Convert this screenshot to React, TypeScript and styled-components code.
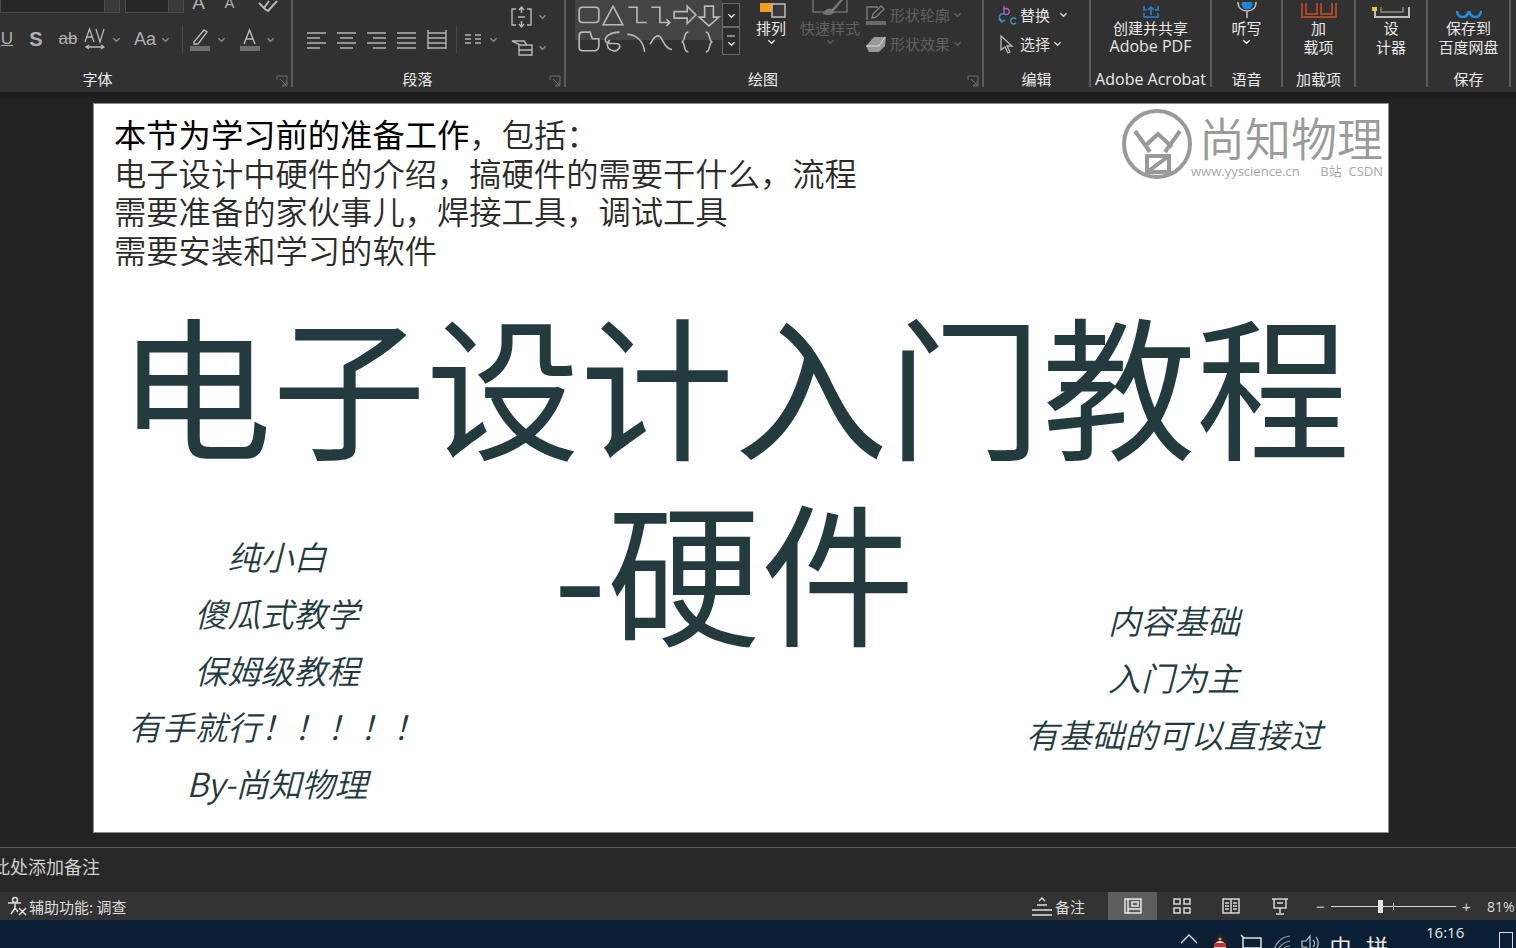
import React from "react";
import styled, { createGlobalStyle } from "styled-components";

const Global = createGlobalStyle`
  html, body { margin: 0; padding: 0; background: #222222; }
  body { font-family: "Noto Sans CJK SC", "Liberation Sans", sans-serif; }
`;

const Page = styled.div`
  width: 1516px;
  height: 948px;
  overflow: hidden;
  display: flex;
  flex-direction: column;
  background: #222222;
`;

/* ---------- ribbon ---------- */
const Ribbon = styled.div`
  height: 92px;
  flex: none;
  display: flex;
  background: #313131;
  overflow: hidden;
`;
const Group = styled.div<{ $w: number; $last?: boolean }>`
  position: relative;
  width: ${(p) => p.$w}px;
  flex: none;
  box-sizing: border-box;
  height: 87px;
  display: flex;
  flex-direction: column;
  border-right: ${(p) => (p.$last ? "0" : "2px solid #5c5c5c")};
`;
const Body = styled.div<{ $pl?: number }>`
  height: 70px;
  flex: none;
  display: flex;
  flex-direction: column;
  padding-left: ${(p) => p.$pl ?? 0}px;
`;
const GroupLabel = styled.div<{ $pr?: number }>`
  height: 17px;
  line-height: 17px;
  font-size: 15px;
  color: #ececec;
  text-align: center;
  padding-right: ${(p) => p.$pr ?? 0}px;
  font-family: "Noto Sans CJK SC", sans-serif;
  white-space: nowrap;
`;
const Launcher = styled.svg`
  position: absolute;
  right: 3px;
  bottom: 0;
  width: 12px;
  height: 12px;
`;
const Row = styled.div<{ $h: number; $mt?: number; $end?: boolean }>`
  height: ${(p) => p.$h}px;
  margin-top: ${(p) => p.$mt ?? 0}px;
  display: flex;
  align-items: ${(p) => (p.$end ? "flex-end" : "center")};
  flex: none;
`;
const Slot = styled.div<{ $w: number }>`
  width: ${(p) => p.$w}px;
  flex: none;
  display: flex;
  align-items: center;
  justify-content: center;
  color: #b8b8b8;
`;
const FontBox = styled.div<{ $w: number }>`
  width: ${(p) => p.$w}px;
  height: 13px;
  flex: none;
  background: #262626;
  border: 1px solid #4c4c4c;
  border-top: 0;
  box-sizing: border-box;
  display: flex;
  justify-content: flex-end;
`;
const FontBoxBtn = styled.div`
  width: 14px;
  background: #3a3a3a;
  border-left: 1px solid #4c4c4c;
`;
const Glyph = styled.span<{ $size?: number; $weight?: number; $strike?: boolean; $under?: boolean }>`
  font-family: "Liberation Sans", sans-serif;
  font-size: ${(p) => p.$size ?? 17}px;
  font-weight: ${(p) => p.$weight ?? 400};
  line-height: 20px;
  color: #b0b0b0;
  text-decoration: ${(p) => (p.$strike ? "line-through" : p.$under ? "underline" : "none")};
`;
const Divider = styled.div`
  width: 1px;
  height: 28px;
  background: #484848;
  flex: none;
`;
const Chev = ({ c = "#8a8a8a", s = 9 }: { c?: string; s?: number }) => (
  <svg width={s} height={s} viewBox="0 0 10 10" fill="none" stroke={c} strokeWidth="1.5">
    <path d="M1.5 3.5 5 7l3.5-3.5" />
  </svg>
);
const Ic = styled.svg`
  flex: none;
  display: block;
`;
const LauncherIcon = () => (
  <Launcher viewBox="0 0 12 12" fill="none" stroke="#6d6d6d">
    <path d="M1 5V1h10v10H6M4 4l6 6M10 6v4H6" />
  </Launcher>
);
const Lines = ({ d }: { d: string }) => (
  <Ic width="20" height="20" viewBox="0 0 20 20" fill="none" stroke="#b4b4b4" strokeWidth="1.4">
    <path d={d} />
  </Ic>
);

const Gallery = styled.div`
  width: 147px;
  height: 55px;
  flex: none;
  background: #444444;
  display: grid;
  grid-template-columns: repeat(6, 24px);
  grid-template-rows: 17px 27px 26px;
  align-items: center;
  justify-items: center;
  margin-top: -15px;
  padding-left: 2px;
  box-sizing: border-box;
`;
const GalleryShape = styled.svg`
  width: 24px;
  height: 24px;
`;
const ScrollCol = styled.div`
  display: flex;
  flex-direction: column;
  margin-top: 3px;
  flex: none;
`;
const ScrollBtn = styled.div<{ $h: number }>`
  width: 18px;
  height: ${(p) => p.$h}px;
  box-sizing: border-box;
  border: 1px solid #6a6a6a;
  background: #2c2c2c;
  display: flex;
  align-items: center;
  justify-content: center;
  flex-direction: column;
  gap: 1px;
`;
const BigCol = styled.div<{ $w: number; $dim?: boolean }>`
  width: ${(p) => p.$w}px;
  flex: none;
  display: flex;
  flex-direction: column;
  align-items: center;
  color: ${(p) => (p.$dim ? "#616161" : "#e8e8e8")};
  font-size: 15px;
  line-height: 19px;
  white-space: nowrap;
`;
const IconTop = styled.div`
  height: 18px;
  flex: none;
  display: flex;
  align-items: flex-end;
  justify-content: center;
`;
const SideRow = styled.div<{ $dim?: boolean }>`
  display: flex;
  align-items: center;
  gap: 3px;
  height: 29px;
  font-size: 15px;
  color: ${(p) => (p.$dim ? "#616161" : "#e4e4e4")};
  white-space: nowrap;
`;
const SideCol = styled.div<{ $w: number; $pl?: number }>`
  width: ${(p) => p.$w}px;
  padding-left: ${(p) => p.$pl ?? 0}px;
  box-sizing: border-box;
  flex: none;
  display: flex;
  flex-direction: column;
`;
const Columns = styled.div<{ $pl?: number }>`
  display: flex;
  padding-left: ${(p) => p.$pl ?? 0}px;
`;
const AcrobatText = styled.span`
  font-family: "Open Sans", "Noto Sans CJK SC", sans-serif;
  font-size: 16px;
  line-height: 19px;
`;

/* ---------- workspace ---------- */
const Workspace = styled.div`
  height: 755px;
  flex: none;
  padding: 12px 0 0 94px;
  box-sizing: border-box;
  background: linear-gradient(#191919, #232323 9px);
`;
const Slide = styled.div`
  position: relative;
  width: 1294px;
  height: 728px;
  background: #ffffff;
  overflow: hidden;
  box-shadow: 0 0 0 1px #8c8c8c;
`;
const Intro = styled.div`
  position: absolute;
  left: 20px;
  top: 10px;
  font-size: 32.3px;
  line-height: 38.7px;
  font-weight: 350;
  color: #2b2b2b;
  white-space: nowrap;
`;
const Strong = styled.span`
  color: #000;
  font-weight: 400;
`;
const Title = styled.div`
  position: absolute;
  left: 0;
  width: 1280px;
  top: 185px;
  text-align: center;
  font-size: 154px;
  line-height: 186px;
  font-weight: 400;
  color: #233b3f;
`;
const Slogan = styled.div<{ $left: number; $top: number; $w: number }>`
  position: absolute;
  left: ${(p) => p.$left}px;
  top: ${(p) => p.$top}px;
  width: ${(p) => p.$w}px;
  text-align: center;
  font-size: 33px;
  line-height: 56.8px;
  font-style: italic;
  font-weight: 350;
  color: #233b3f;
  white-space: nowrap;
`;
const Logo = styled.div`
  position: absolute;
  right: 5px;
  top: 4px;
  display: flex;
  gap: 8px;
  color: #9a9a9a;
`;
const LogoText = styled.div`
  display: flex;
  flex-direction: column;
`;
const LogoName = styled.div`
  font-size: 46px;
  line-height: 56px;
  font-weight: 350;
  white-space: nowrap;
  margin-left: -2px;
`;
const LogoSub = styled.div`
  display: flex;
  justify-content: space-between;
  font-size: 13px;
  line-height: 15px;
  margin-left: -10px;
  color: #a8a8a8;
  font-family: "Open Sans", "Noto Sans CJK SC", sans-serif;
  white-space: nowrap;
`;

/* ---------- notes + status ---------- */
const Notes = styled.div`
  height: 45px;
  flex: none;
  box-sizing: border-box;
  border-top: 1px solid #5a5a5a;
  background: #272727;
  color: #cfcfcf;
  font-size: 18px;
  line-height: 37px;
  overflow: hidden;
  white-space: nowrap;
`;
const NotesText = styled.span`
  display: inline-block;
  margin-left: -8px;
`;
const Status = styled.div`
  height: 28px;
  flex: none;
  background: #333333;
  color: #dcdcdc;
  display: flex;
  align-items: center;
  font-size: 15px;
  white-space: nowrap;
  overflow: hidden;
`;
const StatusLeft = styled.div`
  display: flex;
  align-items: center;
  gap: 2px;
  padding-left: 7px;
  flex: 1;
`;
const StatusNote = styled.div`
  display: flex;
  align-items: center;
  gap: 2px;
  width: 77px;
  flex: none;
`;
const ViewBtn = styled.div<{ $on?: boolean }>`
  width: 49px;
  height: 28px;
  flex: none;
  display: flex;
  align-items: center;
  justify-content: center;
  background: ${(p) => (p.$on ? "#5d5d5d" : "transparent")};
`;
const ZoomGap = styled.div`
  width: 11px;
  flex: none;
`;
const ZoomSign = styled.span`
  width: 11px;
  flex: none;
  text-align: center;
  font-family: "Liberation Sans", sans-serif;
  font-size: 15px;
  color: #cfcfcf;
`;
const Track = styled.div`
  position: relative;
  width: 125px;
  height: 1px;
  flex: none;
  margin: 0 5px;
  background: #d6d6d6;
`;
const Thumb = styled.div`
  position: absolute;
  left: 47px;
  top: -6px;
  width: 5px;
  height: 13px;
  background: #e4e4e4;
`;
const Tick = styled.div`
  position: absolute;
  left: 62px;
  top: -3px;
  width: 1px;
  height: 7px;
  background: #b8b8b8;
`;
const Percent = styled.span`
  font-family: "Open Sans", sans-serif;
  font-size: 14px;
  margin-left: 15px;
  width: 29px;
  flex: none;
`;

/* ---------- taskbar ---------- */
const Taskbar = styled.div`
  height: 28px;
  flex: none;
  background: #0b2034;
  display: flex;
  justify-content: flex-end;
  overflow: hidden;
`;
const Tray = styled.div<{ $w: number }>`
  width: ${(p) => p.$w}px;
  flex: none;
  display: flex;
  justify-content: center;
  padding-top: 14px;
  height: 40px;
  box-sizing: border-box;
  color: #e8e8e8;
  font-size: 22px;
  line-height: 22px;
`;
const Clock = styled.div`
  width: 97px;
  flex: none;
  padding-left: 29px;
  box-sizing: border-box;
  font-family: "Open Sans", sans-serif;
  font-size: 15px;
  line-height: 25px;
  color: #e6e6e6;
`;
const Notify = styled.div`
  width: 22px;
  flex: none;
  padding: 12px 0 0 5px;
  box-sizing: border-box;
`;
const NotifyBox = styled.div`
  width: 14px;
  height: 24px;
  border: 1px solid #dcdcdc;
  box-sizing: border-box;
`;

const S = "#b8b8b8";
const shapes = [
  "M2 6a3 3 0 0 1 3-3h12a3 3 0 0 1 3 3v8a3 3 0 0 1-3 3H5a3 3 0 0 1-3-3z",
  "M11 2 20 19H2z",
  "M3 3h8v14h9",
  "M2 3h8v14h9m-3-3 3 3-3 3",
  "M1 7h12V2l8 8-8 8v-5H1z",
  "M7 2h8v10h5l-9 8-9-8h5z",
  "M2 5a3 3 0 0 1 3-3h7l2 6h6v7a4 4 0 0 1-4 4H5a3 3 0 0 1-3-3z",
  "M17 2C9 2 3 6 4 10c2 5 12 0 13 4 1 3-3 6-6 5-5-1-7-6-3-10",
  "M2 4c8 0 15 6 16 16",
  "M1 13c3-6 6-9 9-7 3 3 4 11 11 12",
  "M14 2c-5 0-2 8-6 9 4 1 1 9 6 9",
  "M8 2c5 0 2 8 6 9-4 1-1 9-6 9",
];

export default function App() {
  return (
    <Page>
      <Global />
      <Ribbon>
        <Group $w={293}>
          <Body>
            <Row $h={13} $end>
              <FontBox $w={120}><FontBoxBtn /></FontBox>
              <Slot $w={5} />
              <FontBox $w={59}><FontBoxBtn /></FontBox>
              <Slot $w={7} />
              <Slot $w={15}><Glyph $size={19}>A</Glyph></Slot>
              <Slot $w={16} />
              <Slot $w={15}><Glyph $size={15}>A</Glyph></Slot>
              <Slot $w={21} />
              <Ic width="20" height="13" viewBox="0 0 20 13" fill="none" stroke={S} strokeWidth="2">
                <path d="M1 3l6 6 3 2 9-10M6 8l5-7" />
              </Ic>
            </Row>
            <Row $h={26} $mt={13}>
              <Slot $w={14}><Glyph $under>U</Glyph></Slot>
              <Slot $w={15} />
              <Slot $w={14}><Glyph $weight={700} $size={20}>S</Glyph></Slot>
              <Slot $w={13} />
              <Slot $w={24}><Glyph $strike $size={17}>ab</Glyph></Slot>
              <Slot $w={4} />
              <Slot $w={22}>
                <Ic width="22" height="24" viewBox="0 0 22 24" fill="none" stroke={S} strokeWidth="1.3">
                  <path d="M1 15 5.500 2 10 15M3 10h5M12 2l4 13 4-13M2 20h18M5 18l-3 2 3 2M17 18l3 2-3 2" />
                </Ic>
              </Slot>
              <Slot $w={3} />
              <Slot $w={14}><Chev /></Slot>
              <Slot $w={11} />
              <Slot $w={22}><Glyph $size={18}>Aa</Glyph></Slot>
              <Slot $w={2} />
              <Slot $w={14}><Chev /></Slot>
              <Slot $w={10} />
              <Divider />
              <Slot $w={6} />
              <Slot $w={21}>
                <Ic width="21" height="24" viewBox="0 0 21 24" fill="none">
                  <path d="M5 15 15 3l3 2-9 12-4 0z" stroke={S} strokeWidth="1.400" />
                  <rect x="1" y="19" width="20" height="5" fill="#6e6e6e" />
                </Ic>
              </Slot>
              <Slot $w={4} />
              <Slot $w={15}><Chev /></Slot>
              <Slot $w={10} />
              <Slot $w={21}>
                <Ic width="21" height="24" viewBox="0 0 21 24" fill="none">
                  <path d="M5 17 10.500 3 16 17M7 12h7" stroke={S} strokeWidth="1.500" />
                  <rect x="1" y="19" width="20" height="5" fill="#6e6e6e" />
                </Ic>
              </Slot>
              <Slot $w={3} />
              <Slot $w={15}><Chev /></Slot>
            </Row>
          </Body>
          <GroupLabel $pr={96}>字体</GroupLabel>
          <LauncherIcon />
        </Group>

        <Group $w={273}>
          <Body>
            <Columns $pl={9}>
              <div>
                <Row $h={8} />
                <Row $h={26} $mt={18}>
                  <Slot $w={30}><Lines d="M0 4h19M0 9h13M0 14h19M0 19h13" /></Slot>
                  <Slot $w={30}><Lines d="M0 4h19M3 9h13M0 14h19M3 19h13" /></Slot>
                  <Slot $w={30}><Lines d="M0 4h19M6 9h13M0 14h19M6 19h13" /></Slot>
                  <Slot $w={30}><Lines d="M0 4h19M0 9h19M0 14h19M0 19h19" /></Slot>
                  <Slot $w={30}>
                    <Lines d="M1 1v19M19 1v19M1 4h18M1 9h18M1 14h18M1 19h18" />
                  </Slot>
                  <Slot $w={4} />
                  <Divider />
                  <Slot $w={7} />
                  <Slot $w={20}><Lines d="M1 6h6M1 10h6M1 14h6M11 6h6M11 10h6M11 14h6" /></Slot>
                  <Slot $w={18}><Chev /></Slot>
                </Row>
              </div>
              <SideCol $w={50} $pl={9}>
                <Row $h={31} $mt={1}>
                  <Ic width="22" height="22" viewBox="0 0 22 22" fill="none" stroke={S} strokeWidth="1.400">
                    <path d="M5 3H1v16h4M16 3h4v16h-4M10.500 1v6M10.500 15v6M8 4l2.500-3L13 4M8 18l2.500 3 2.500-3M7 11h7" />
                  </Ic>
                  <Slot $w={18}><Chev /></Slot>
                </Row>
                <Row $h={30}>
                  <Ic width="22" height="18" viewBox="0 0 22 18" fill="none" stroke={S} strokeWidth="1.400">
                    <path d="M1 3h12l3 4H9zM8 7h13v10H8zM8 12h13" />
                  </Ic>
                  <Slot $w={18}><Chev /></Slot>
                </Row>
              </SideCol>
            </Columns>
          </Body>
          <GroupLabel $pr={22}>段落</GroupLabel>
          <LauncherIcon />
        </Group>

        <Group $w={418}>
          <Body>
            <Columns $pl={9}>
              <Gallery>
                {Array.from({ length: 6 }).map((_, i) => <span key={i} />)}
                {shapes.map((d, i) => (
                  <GalleryShape key={i} viewBox="0 0 22 22" fill="none" stroke={S} strokeWidth="1.500">
                    <path d={d} />
                  </GalleryShape>
                ))}
              </Gallery>
              <ScrollCol>
                <ScrollBtn $h={24}><Chev c="#e0e0e0" /></ScrollBtn>
                <ScrollBtn $h={28}>
                  <svg width="10" height="3" viewBox="0 0 10 3"><path d="M1 1h8" stroke="#e0e0e0" /></svg>
                  <Chev c="#e0e0e0" />
                </ScrollBtn>
              </ScrollCol>
              <BigCol $w={62}>
                <IconTop>
                  <Ic width="32" height="15" viewBox="0 0 32 15">
                    <rect x="5" y="0" width="14" height="9" fill="#f0a020" />
                    <rect x="17" y="1" width="13" height="13" fill="#3a3a3a" stroke="#bdbdbd" strokeWidth="1.500" />
                  </Ic>
                </IconTop>
                <span>排列</span>
                <Chev c="#e8e8e8" />
              </BigCol>
              <BigCol $w={56} $dim>
                <IconTop>
                  <Ic width="38" height="18" viewBox="0 0 38 18" fill="none">
                    <path d="M2 0v12h34V0" stroke="#6d6d6d" strokeWidth="1.500" />
                    <path d="M12 14c1-5 6-6 9-5l8-9h3l-9 11c0 4-5 5-11 3z" fill="#777" />
                  </Ic>
                </IconTop>
                <span>快速样式</span>
                <Chev c="#616161" />
              </BigCol>
              <SideCol $w={110} $pl={7}>
                <SideRow $dim>
                  <Ic width="22" height="22" viewBox="0 0 22 22" fill="none">
                    <path d="M2 16V3h11M7 14l1-4 8-8 3 3-8 8z" stroke="#7d7d7d" strokeWidth="1.400" />
                    <rect x="1" y="17" width="20" height="4" fill="#6a6a6a" />
                  </Ic>
                  <span>形状轮廓</span>
                  <Chev c="#616161" />
                </SideRow>
                <SideRow $dim>
                  <Ic width="22" height="18" viewBox="0 0 22 18">
                    <path d="M1 11 9 2h12l-1 9-6 6H4z" fill="#999" />
                    <path d="M1 11h13l6-9" stroke="#ddd" fill="none" />
                  </Ic>
                  <span>形状效果</span>
                  <Chev c="#616161" />
                </SideRow>
              </SideCol>
            </Columns>
          </Body>
          <GroupLabel $pr={22}>绘图</GroupLabel>
          <LauncherIcon />
        </Group>

        <Group $w={107}>
          <Body>
            <SideCol $w={105} $pl={13}>
              <SideRow>
                <Ic width="20" height="22" viewBox="0 0 20 22" fill="none">
                  <path d="M7 2v8M7 5.500a3 3 0 1 1 0 4" stroke="#b062b0" strokeWidth="1.400" />
                  <path d="M7 10c-4-1-7 3-2 7M2 15l3 3 3-2" stroke="#3a8fd0" strokeWidth="1.500" />
                  <path d="M19 15a3 3 0 1 0 0 4" stroke="#3a9fb0" strokeWidth="1.400" />
                </Ic>
                <span>替换</span>
                <Slot $w={21}><Chev c="#d8d8d8" /></Slot>
              </SideRow>
              <SideRow>
                <Ic width="20" height="20" viewBox="0 0 20 20" fill="none" stroke={S} strokeWidth="1.300">
                  <path d="M4 2v14l4-3 3 6 2-1-3-6h5z" />
                </Ic>
                <span>选择</span>
                <Chev c="#d8d8d8" />
              </SideRow>
            </SideCol>
          </Body>
          <GroupLabel>编辑</GroupLabel>
        </Group>

        <Group $w={121}>
          <Body>
            <BigCol $w={119}>
              <IconTop>
                <Ic width="24" height="12" viewBox="0 0 24 12" fill="none" stroke="#2a7fd0" strokeWidth="1.600">
                  <path d="M5 0v4h3M19 0v4h-3M12 9V1M9 4l3-3 3 3M5 7v4h14V7" />
                </Ic>
              </IconTop>
              <span>创建并共享</span>
              <AcrobatText>Adobe PDF</AcrobatText>
            </BigCol>
          </Body>
          <GroupLabel><AcrobatText>Adobe Acrobat</AcrobatText></GroupLabel>
        </Group>

        <Group $w={71}>
          <Body>
            <BigCol $w={69}>
              <IconTop>
                <Ic width="24" height="16" viewBox="0 0 24 16" fill="none">
                  <circle cx="12" cy="2" r="5.500" fill="#1f86d6" />
                  <path d="M3 0c0 6 4 9 9 9s9-3 9-9M12 9v7" stroke="#bdbdbd" strokeWidth="1.600" />
                </Ic>
              </IconTop>
              <span>听写</span>
              <Chev c="#e8e8e8" />
            </BigCol>
          </Body>
          <GroupLabel>语音</GroupLabel>
        </Group>

        <Group $w={73}>
          <Body>
            <BigCol $w={71}>
              <IconTop>
                <Ic width="36" height="15" viewBox="0 0 36 15" fill="none" stroke="#a8482a" strokeWidth="2">
                  <path d="M1 0v14h34V0M16 0v11H5V0M31 0v11H20V0" />
                </Ic>
              </IconTop>
              <span>加</span>
              <span>载项</span>
            </BigCol>
          </Body>
          <GroupLabel>加载项</GroupLabel>
        </Group>

        <Group $w={72}>
          <Body>
            <BigCol $w={70}>
              <IconTop>
                <Ic width="38" height="11" viewBox="0 0 38 11" fill="none">
                  <path d="M3 0v10h34V0" stroke="#bdbdbd" strokeWidth="2" />
                  <path d="M9 0v5h22V0" stroke="#8a8a8a" strokeWidth="1.500" />
                  <rect x="0" y="0" width="5" height="4" fill="#f0c040" />
                </Ic>
              </IconTop>
              <span>设</span>
              <span>计器</span>
            </BigCol>
          </Body>
          <GroupLabel>&nbsp;</GroupLabel>
        </Group>

        <Group $w={83}>
          <Body>
            <BigCol $w={81}>
              <IconTop>
                <Ic width="26" height="7" viewBox="0 0 26 7" fill="none" stroke="#1e8fe6" strokeWidth="2.500">
                  <path d="M1 0c0 4 3 6 6 6 3 0 5-3 6-6M13 0c1 3 3 6 6 6 3 0 6-2 6-6" />
                </Ic>
              </IconTop>
              <span>保存到</span>
              <span>百度网盘</span>
            </BigCol>
          </Body>
          <GroupLabel>保存</GroupLabel>
        </Group>
      </Ribbon>

      <Workspace>
        <Slide>
          <Intro>
            <Strong>本节为学习前的准备工作</Strong>，包括：<br />
            电子设计中硬件的介绍，搞硬件的需要干什么，流程<br />
            需要准备的家伙事儿，焊接工具，调试工具<br />
            需要安装和学习的软件
          </Intro>
          <Title>电子设计入门教程<br />-硬件</Title>
          <Slogan $left={23} $top={424} $w={320}>
            纯小白<br />傻瓜式教学<br />保姆级教程<br />有手就行！！！！！<br />By-尚知物理
          </Slogan>
          <Slogan $left={920} $top={488} $w={320}>
            内容基础<br />入门为主<br />有基础的可以直接过
          </Slogan>
          <Logo>
            <Ic width="72" height="72" viewBox="0 0 72 72" fill="none" stroke="#999" strokeWidth="4">
              <circle cx="36" cy="36" r="33" />
              <path d="M14 23 29 44M59 23 44 44M23 39 37 26l14 13M26 48h22v16H26zM26 64 48 48" />
            </Ic>
            <LogoText>
              <LogoName>尚知物理</LogoName>
              <LogoSub><span>www.yyscience.cn</span><span>B站&nbsp;&nbsp;CSDN</span></LogoSub>
            </LogoText>
          </Logo>
        </Slide>
      </Workspace>

      <Notes><NotesText>此处添加备注</NotesText></Notes>

      <Status>
        <StatusLeft>
          <Ic width="20" height="20" viewBox="0 0 20 20" fill="none" stroke="#dcdcdc" strokeWidth="1.500">
            <circle cx="8" cy="4" r="2.500" />
            <path d="M1 7h13M8 8v4l-4 6M8 12l3 4M12 12l7 7M19 12l-7 7" />
          </Ic>
          <span>辅助功能: 调查</span>
        </StatusLeft>
        <StatusNote>
          <Ic width="22" height="22" viewBox="0 0 22 22" fill="none" stroke="#e0e0e0" strokeWidth="1.400">
            <path d="M1 15h20M1 20h20M6 10h10M8 6l3-3 3 3" />
          </Ic>
          <span>备注</span>
        </StatusNote>
        <ViewBtn $on>
          <Ic width="18" height="16" viewBox="0 0 18 16" fill="none" stroke="#e8e8e8" strokeWidth="1.500">
            <path d="M1 1h16v14H1zM4 1v14M4 11h13M8 4h6v4H8z" />
          </Ic>
        </ViewBtn>
        <ViewBtn>
          <Ic width="18" height="16" viewBox="0 0 18 16" fill="none" stroke="#d8d8d8" strokeWidth="1.500">
            <path d="M1 1h6v5H1zM11 1h6v5h-6zM1 10h6v5H1zM11 10h6v5h-6z" />
          </Ic>
        </ViewBtn>
        <ViewBtn>
          <Ic width="18" height="16" viewBox="0 0 18 16" fill="none" stroke="#d8d8d8" strokeWidth="1.500">
            <path d="M1 1h16v14H1zM9 1v14M3 5h4M3 8h4M3 11h4M11 5h4M11 8h4M11 11h4" />
          </Ic>
        </ViewBtn>
        <ViewBtn>
          <Ic width="18" height="18" viewBox="0 0 18 18" fill="none" stroke="#d8d8d8" strokeWidth="1.500">
            <path d="M1 2h16M3 2v9h12V2M9 11v5M5 17h8M6 6h6" />
          </Ic>
        </ViewBtn>
        <ZoomGap />
        <ZoomSign>−</ZoomSign>
        <Track><Thumb /><Tick /></Track>
        <ZoomSign>+</ZoomSign>
        <Percent>81%</Percent>
      </Status>

      <Taskbar>
        <Tray $w={32}>
          <Ic width="18" height="10" viewBox="0 0 18 10" fill="none" stroke="#e0e0e0" strokeWidth="1.300">
            <path d="M1 9 9 1l8 8" />
          </Ic>
        </Tray>
        <Tray $w={30}>
          <Ic width="16" height="22" viewBox="0 0 16 22">
            <ellipse cx="8" cy="6" rx="5" ry="6" fill="#222" />
            <ellipse cx="8" cy="13" rx="6" ry="6" fill="#e8e8e8" />
            <rect x="2" y="9" width="12" height="4" fill="#d42a2a" />
            <circle cx="8" cy="5" r="1.500" fill="#f0a020" />
          </Ic>
        </Tray>
        <Tray $w={31}>
          <Ic width="22" height="16" viewBox="0 0 22 16" fill="none" stroke="#e0e0e0" strokeWidth="1.500">
            <path d="M3 4h18v10H3zM1 1l3 3" />
          </Ic>
        </Tray>
        <Tray $w={31}>
          <Ic width="20" height="20" viewBox="0 0 20 20" fill="none" stroke="#9aa4ad" strokeWidth="1.200">
            <path d="M2 19C2 10 9 3 18 2M6 19c0-6 5-11 12-12M10 19c0-4 3-7 8-7" />
          </Ic>
        </Tray>
        <Tray $w={27}>
          <Ic width="20" height="18" viewBox="0 0 20 18" fill="none" stroke="#c0c6cc" strokeWidth="1.200">
            <path d="M1 7h4l4-5v16l-4-5H1zM12 6c2 2 2 5 0 7M15 3c3 4 3 8 0 12" />
          </Ic>
        </Tray>
        <Tray $w={33}>中</Tray>
        <Tray $w={40}>拼</Tray>
        <Clock>16:16</Clock>
        <Notify><NotifyBox /></Notify>
      </Taskbar>
    </Page>
  );
}
